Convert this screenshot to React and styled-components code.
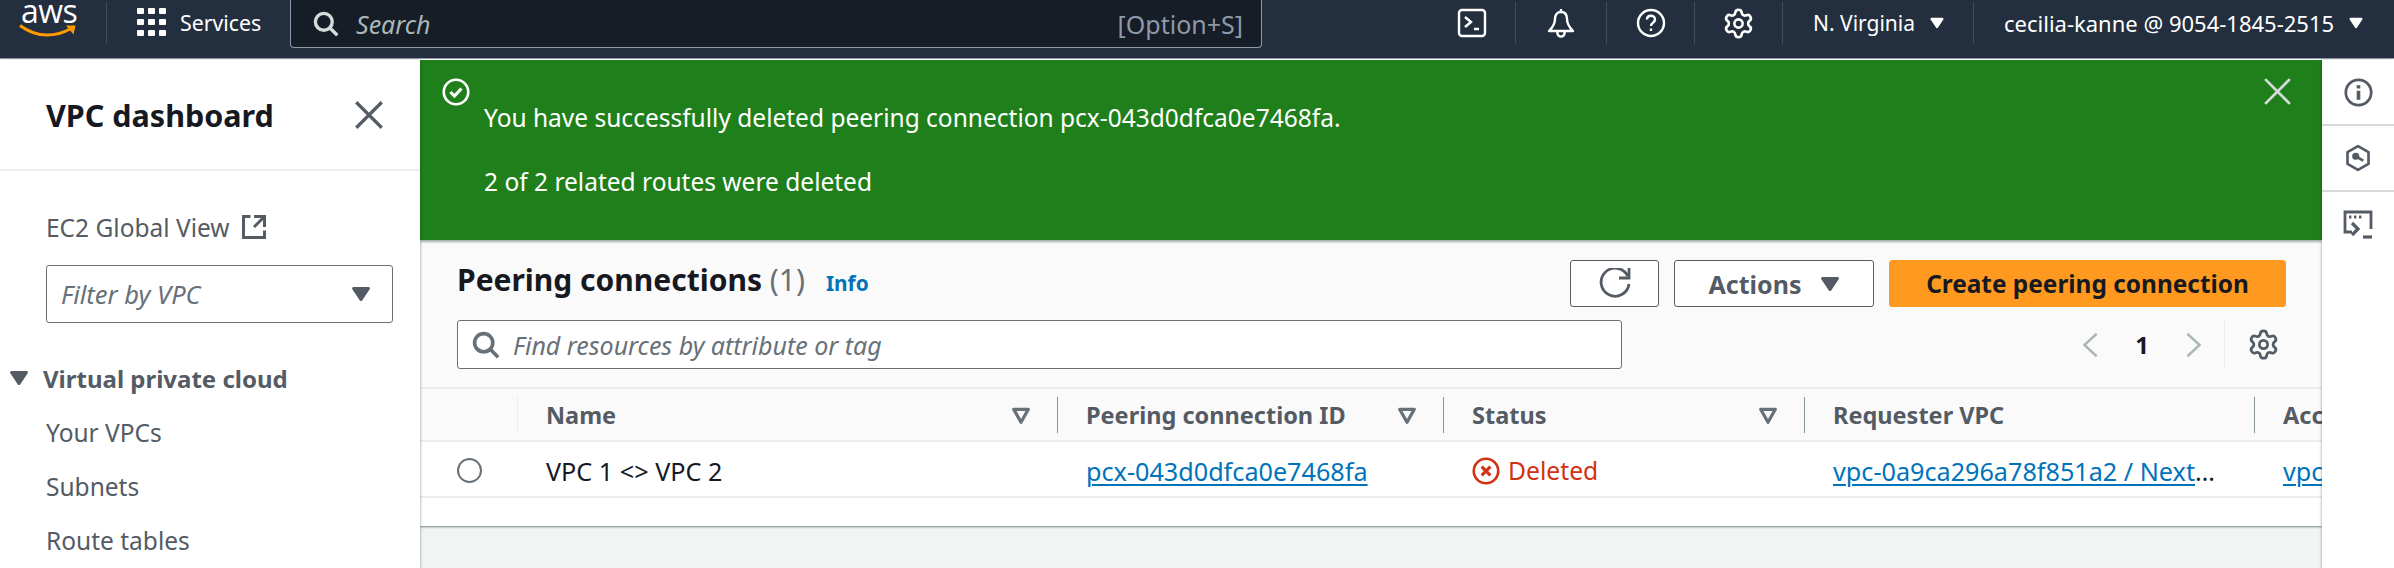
import React from 'react';
import styled, { createGlobalStyle } from 'styled-components';
import { Settings } from 'lucide-react';

const FONT = '"Noto Sans", "Open Sans", Arial, sans-serif';
const COLUMNS = '97px 540px 386px 361px 450px 300px';

const GlobalStyle = createGlobalStyle`
  html, body { margin: 0; padding: 0; background: #f2f3f3; }
  * { box-sizing: border-box; }
  body { font-family: ${FONT}; color: #16191f; overflow: hidden; }
`;

const Page = styled.div`
  width: 100%;
  height: 100vh;
  display: flex;
  flex-direction: column;
  overflow: hidden;
  background: #fff;
`;

const TopBar = styled.header`
  flex: none;
  height: 59px;
  display: flex;
  align-items: flex-start;
  background: #232f3e;
  border-bottom: 1px solid #8d99a8;
  color: #fff;
  font-size: 21.3px;
`;

const LogoBox = styled.div`
  width: 107px;
  height: 42px;
  margin-top: 2px;
  border-right: 1px solid #414d5c;
  padding-left: 19px;
  display: flex;
  flex-direction: column;
  gap: 4px;
`;

const LogoWord = styled.span`
  font-family: "Open Sans", sans-serif;
  font-size: 32px;
  line-height: 18px;
  height: 18px;
  padding-left: 2px;
  letter-spacing: -0.5px;
`;

const ServicesButton = styled.div`
  width: 183px;
  height: 44px;
  padding-left: 30px;
  display: flex;
  align-items: center;
  gap: 14px;
`;

const SearchBox = styled.div`
  width: 972px;
  height: 48px;
  padding: 0 18px 0 21px;
  display: flex;
  align-items: center;
  gap: 17px;
  background: #161d26;
  border: 1px solid #8d99a8;
  border-top: none;
  border-radius: 0 0 4px 4px;
  font-size: 25px;
`;

const SearchHint = styled.span`
  font-style: italic;
  color: #aab7b8;
  flex: 1;
`;

const Shortcut = styled.span`
  color: #8d99a8;
`;

const BarRight = styled.div`
  margin-left: auto;
  display: flex;
  align-items: center;
  height: 42px;
  margin-top: 2px;
`;

const BarIcon = styled.div`
  width: ${p => p.$w}px;
  height: 42px;
  display: flex;
  align-items: center;
  justify-content: center;
  border-right: 1px solid #414d5c;
`;

const BarMenu = styled.div`
  width: ${p => p.$w}px;
  height: 42px;
  padding-left: 30px;
  display: flex;
  align-items: center;
  gap: 11px;
  border-right: ${p => (p.$last ? 'none' : '1px solid #414d5c')};
  font-size: ${p => p.$size}px;
  white-space: nowrap;
`;

const Body = styled.div`
  flex: 1;
  min-height: 0;
  margin-top: 1px;
  display: flex;
`;

const Sidebar = styled.aside`
  flex: none;
  width: 420px;
  background: #fff;
  box-shadow: 1px 0 2px rgba(0, 28, 36, 0.25);
  z-index: 1;
  overflow: hidden;
`;

const SideHeader = styled.div`
  height: 111px;
  padding: 0 34px 0 46px;
  display: flex;
  align-items: center;
  justify-content: space-between;
  border-bottom: 2px solid #eaeded;
`;

const SideTitle = styled.h2`
  margin: 0;
  font-size: 30.5px;
  font-weight: 700;
`;

const GlobalView = styled.div`
  margin: 38px 0 0 46px;
  display: flex;
  align-items: center;
  gap: 10px;
  height: 36px;
  font-size: 24.5px;
  color: #545b64;
`;

const FilterSelect = styled.div`
  width: 347px;
  height: 58px;
  margin: 20px 0 0 46px;
  padding: 0 16px 0 14px;
  display: flex;
  align-items: center;
  justify-content: space-between;
  border: 1px solid #687078;
  border-radius: 3px;
  font-size: 25.5px;
  font-style: italic;
  color: #687078;
`;

const SectionTitle = styled.div`
  margin: 37px 0 0 4px;
  height: 36px;
  display: flex;
  align-items: center;
  gap: 9px;
  font-size: 24px;
  font-weight: 700;
  color: #545b64;
`;

const NavList = styled.ul`
  list-style: none;
  margin: 19px 0 0 46px;
  padding: 0;
`;

const NavItem = styled.li`
  height: 54px;
  line-height: 36px;
  font-size: 24.5px;
  color: #545b64;
`;

const Main = styled.main`
  flex: 1;
  min-width: 0;
  background: #f2f3f3;
`;

const Banner = styled.section`
  height: 180px;
  padding: 15px 28px 0 22px;
  display: flex;
  align-items: flex-start;
  background: #1f801b;
  color: #fff;
  font-size: 24.5px;
  box-shadow: 0 2px 2px rgba(0, 28, 36, 0.35);
  position: relative;
`;

const BannerIcon = styled.span`
  display: flex;
  margin-top: 3px;
`;

const BannerText = styled.div`
  flex: 1;
  margin: 27px 0 0 14px;
`;

const BannerLine = styled.p`
  margin: 0 0 32px;
  line-height: 32px;
`;

const Panel = styled.section`
  height: 286px;
  background: #fff;
  box-shadow: 0 1px 2px rgba(0, 28, 36, 0.5);
  overflow: hidden;
`;

const PanelHeader = styled.div`
  height: 147px;
  padding: 19px 36px 0 37px;
  background: #fafafa;
  display: flex;
  flex-direction: column;
  gap: 12px;
`;

const HeaderRow = styled.div`
  display: flex;
  align-items: center;
  justify-content: space-between;
`;

const TitleGroup = styled.div`
  display: flex;
  align-items: baseline;
  gap: 21px;
  padding-bottom: 8px;
`;

const PanelTitle = styled.h1`
  margin: 0;
  font-size: 30px;
  font-weight: 700;
`;

const Count = styled.span`
  font-weight: 400;
  color: #687078;
`;

const InfoLink = styled.a`
  font-size: 20.8px;
  font-weight: 700;
  color: #0073bb;
`;

const Actions = styled.div`
  display: flex;
  gap: 15px;
`;

const Button = styled.div`
  width: ${p => p.$w}px;
  height: 47px;
  padding-left: ${p => p.$pl || 0}px;
  display: flex;
  align-items: center;
  justify-content: center;
  gap: 14px;
  border: 1px solid ${p => (p.$primary ? '#ff991f' : '#545b64')};
  border-radius: 3px;
  background: ${p => (p.$primary ? '#ff991f' : '#fff')};
  color: ${p => (p.$primary ? '#16191f' : '#545b64')};
  font-size: ${p => (p.$primary ? 24.4 : 25)}px;
  font-weight: 700;
`;

const FindBox = styled.div`
  width: 1165px;
  height: 49px;
  padding-left: 13px;
  display: flex;
  align-items: center;
  gap: 13px;
  background: #fff;
  border: 1px solid #687078;
  border-radius: 3px;
  font-size: 25px;
  font-style: italic;
  color: #687078;
`;

const Pager = styled.div`
  display: flex;
  align-items: center;
  height: 49px;
`;

const PageNumber = styled.span`
  width: 72px;
  text-align: center;
  font-size: 24px;
  font-weight: 700;
`;

const PagerSettings = styled.div`
  height: 49px;
  margin-left: 16px;
  padding: 0 6px 0 22px;
  display: flex;
  align-items: center;
  border-left: 1px solid #eaeded;
  color: #545b64;
`;

const HeadRow = styled.div`
  height: 55px;
  display: grid;
  grid-template-columns: ${COLUMNS};
  align-items: center;
  background: #fafafa;
  border-top: 2px solid #eaeded;
  border-bottom: 2px solid #eaeded;
`;

const HeadCell = styled.div`
  height: 36px;
  padding: 0 23px 0 28px;
  display: flex;
  align-items: center;
  justify-content: space-between;
  border-left: 1px solid ${p => (p.$faint ? '#eaeded' : '#879596')};
  font-size: 23.5px;
  font-weight: 700;
  color: #545b64;
  white-space: nowrap;
`;

const DataRow = styled.div`
  height: 56px;
  padding-top: 3px;
  display: grid;
  grid-template-columns: ${COLUMNS};
  align-items: center;
  border-bottom: 2px solid #eaeded;
  font-size: 25.2px;
`;

const Cell = styled.div`
  padding: 0 34px 0 29px;
  white-space: nowrap;
  overflow: hidden;
  text-overflow: ellipsis;
`;

const RadioCell = styled.div`
  padding-left: 37px;
  display: flex;
`;

const Radio = styled.span`
  width: 25px;
  height: 25px;
  border: 2px solid #687078;
  border-radius: 50%;
  background: #fff;
`;

const IdLink = styled.a`
  color: #0073bb;
  text-decoration: underline;
  text-decoration-thickness: 2px;
  text-underline-offset: 3px;
`;

const StatusCell = styled.div`
  padding-left: 29px;
  display: flex;
  align-items: center;
  gap: 8px;
  color: #d13212;
  font-size: 24.7px;
`;

const Rail = styled.aside`
  flex: none;
  width: 72px;
  background: #fff;
  box-shadow: -1px 0 2px rgba(0, 28, 36, 0.25);
  z-index: 1;
`;

const RailItem = styled.div`
  height: 66px;
  display: flex;
  align-items: center;
  justify-content: center;
  border-bottom: ${p => (p.$last ? 'none' : '2px solid #d5dbdb')};
`;

const Icon = ({ size = 16, color = 'currentColor', width = 2, fill = 'none', children }) => (
  <svg width={size} height={size} viewBox="0 0 16 16" fill={fill} stroke={color} strokeWidth={width} style={{ flex: 'none' }}>
    {children}
  </svg>
);

const CaretDown = ({ size, color }) => (
  <Icon size={size} color={color} fill={color} width={1.5}>
    <path d="M4 5h8l-4 6z" strokeLinejoin="round" />
  </Icon>
);

const SortCaret = () => (
  <Icon size={26} color="#687078" width={2}>
    <path d="M3.500 4.500h9L8 12.500z" strokeLinejoin="round" />
  </Icon>
);

const SearchIcon = ({ size, color }) => (
  <Icon size={size} color={color} width={2}>
    <circle cx="7" cy="7" r="5" />
    <path d="m15 15-4.500-4.500" />
  </Icon>
);

const CloseIcon = ({ size, color, width }) => (
  <Icon size={size} color={color} width={width}>
    <path d="m2 2 12 12M14 2 2 14" />
  </Icon>
);

const AwsSmile = () => (
  <svg width="58" height="14" viewBox="0 0 58 14" fill="none" style={{ flex: 'none' }}>
    <path d="M1 1.500c8 6 17 9.500 27 9.500 8 0 16-2 23-6" stroke="#f90" strokeWidth="3" />
    <path d="M47 1.500h9.500l-2 9z" fill="#f90" />
  </svg>
);

const GridIcon = () => (
  <svg width="29" height="28" viewBox="0 0 29 28" fill="#fff">
    {[0, 11, 22].flatMap(y => [0, 11, 22].map(x => (
      <rect key={`${x}-${y}`} x={x} y={y} width="7" height="6" rx="1" />
    )))}
  </svg>
);

const HexIcon = () => (
  <Icon size={28} color="#545b64" width={1.5}>
    <path d="M8 1.200 14 4.600v6.800L8 14.800 2 11.400V4.600z" strokeLinejoin="round" />
    <circle cx="6.700" cy="7" r="1.300" fill="#545b64" />
    <path d="m7.500 7.500 3.500 2" />
  </Icon>
);

const ScreenIcon = () => (
  <Icon size={32} color="#545b64" width={1.400}>
    <path d="M5 11.500H1.500v-10h13V10" />
    <path d="M3.500 4h1.200M6 4h1.200M8.500 4h1.200" />
    <path d="m5 7 3 3-3 3" strokeWidth="1.600" />
    <path d="M10.500 14H15" strokeWidth="1.600" />
  </Icon>
);

export default function App() {
  return (
    <Page>
      <GlobalStyle />
      <TopBar>
        <LogoBox>
          <LogoWord>aws</LogoWord>
          <AwsSmile />
        </LogoBox>
        <ServicesButton>
          <GridIcon />
          <span>Services</span>
        </ServicesButton>
        <SearchBox>
          <SearchIcon size={27} color="#d5dbdb" />
          <SearchHint>Search</SearchHint>
          <Shortcut>[Option+S]</Shortcut>
        </SearchBox>
        <BarRight>
          <BarIcon $w={88}>
            <Icon size={32} color="#fff" width={1.200}>
              <rect x="1.500" y="1.500" width="13" height="13" rx="1.500" />
              <path d="m4.500 5 3 2.500-3 2.500M9 11h2.500" />
            </Icon>
          </BarIcon>
          <BarIcon $w={91}>
            <Icon size={32} color="#fff" width={1.200}>
              <path d="M8 1v1.500M8 2.500c-2 0-3 1.500-3 3.500 0 2.500-1 4-3 6h12c-2-2-3-3.500-3-6 0-2-1-3.500-3-3.500z" strokeLinejoin="round" />
              <path d="M6.200 12v1a1.800 1.800 0 0 0 3.600 0v-1" />
            </Icon>
          </BarIcon>
          <BarIcon $w={88}>
            <Icon size={32} color="#fff" width={1.200}>
              <circle cx="8" cy="8" r="6.500" />
              <path d="M6 6.300C6 5 7 4.400 8 4.400s2 .7 2 1.800c0 1.600-2 1.600-2 3.300M8 10.800v1.200" />
            </Icon>
          </BarIcon>
          <BarIcon $w={88}>
            <Settings size={33} color="#fff" strokeWidth={1.900} />
          </BarIcon>
          <BarMenu $w={191} $size={21}>
            <span>N. Virginia</span>
            <CaretDown size={22} color="#fff" />
          </BarMenu>
          <BarMenu $w={420} $size={22} $last>
            <span>cecilia-kanne @ 9054-1845-2515</span>
            <CaretDown size={22} color="#fff" />
          </BarMenu>
        </BarRight>
      </TopBar>

      <Body>
        <Sidebar>
          <SideHeader>
            <SideTitle>VPC dashboard</SideTitle>
            <CloseIcon size={34} color="#545b64" width={1.500} />
          </SideHeader>
          <GlobalView>
            <span>EC2 Global View</span>
            <Icon size={28} color="#545b64" width={1.700}>
              <path d="M14 8V2H8M14 2 8 8M6 2H2v12h12v-4" />
            </Icon>
          </GlobalView>
          <FilterSelect>
            <span>Filter by VPC</span>
            <CaretDown size={30} color="#545b64" />
          </FilterSelect>
          <SectionTitle>
            <CaretDown size={30} color="#545b64" />
            <span>Virtual private cloud</span>
          </SectionTitle>
          <NavList>
            <NavItem>Your VPCs</NavItem>
            <NavItem>Subnets</NavItem>
            <NavItem>Route tables</NavItem>
          </NavList>
        </Sidebar>

        <Main>
          <Banner>
            <BannerIcon>
              <Icon size={28} color="#fff" width={1.500}>
                <circle cx="8" cy="8" r="7" />
                <path d="m4.800 8 2.300 2.300 4-4.300" strokeWidth="1.800" />
              </Icon>
            </BannerIcon>
            <BannerText>
              <BannerLine>You have successfully deleted peering connection pcx-043d0dfca0e7468fa.</BannerLine>
              <BannerLine>2 of 2 related routes were deleted</BannerLine>
            </BannerText>
            <CloseIcon size={33} color="#d5dbdb" width={1.300} />
          </Banner>

          <Panel>
            <PanelHeader>
              <HeaderRow>
                <TitleGroup>
                  <PanelTitle>Peering connections <Count>(1)</Count></PanelTitle>
                  <InfoLink>Info</InfoLink>
                </TitleGroup>
                <Actions>
                  <Button $w={89}>
                    <Icon size={32} color="#545b64" width={1.400}>
                      <path d="M10 5h5V0M15 8a7 7 0 1 1-.68-4.010" />
                    </Icon>
                  </Button>
                  <Button $w={200} $pl={6}>
                    <span>Actions</span>
                    <CaretDown size={30} color="#545b64" />
                  </Button>
                  <Button $w={397} $primary>Create peering connection</Button>
                </Actions>
              </HeaderRow>
              <HeaderRow>
                <FindBox>
                  <SearchIcon size={29} color="#687078" />
                  <span>Find resources by attribute or tag</span>
                </FindBox>
                <Pager>
                  <Icon size={30} color="#aab7b8" width={1.300}><path d="M11 2 4.500 8l6.500 6" /></Icon>
                  <PageNumber>1</PageNumber>
                  <Icon size={30} color="#aab7b8" width={1.300}><path d="M5 2l6.500 6L5 14" /></Icon>
                  <PagerSettings>
                    <Settings size={33} strokeWidth={2} />
                  </PagerSettings>
                </Pager>
              </HeaderRow>
            </PanelHeader>
            <HeadRow>
              <div />
              <HeadCell $faint>Name <SortCaret /></HeadCell>
              <HeadCell>Peering connection ID <SortCaret /></HeadCell>
              <HeadCell>Status <SortCaret /></HeadCell>
              <HeadCell>Requester VPC</HeadCell>
              <HeadCell>Accepter VPC</HeadCell>
            </HeadRow>
            <DataRow>
              <RadioCell><Radio /></RadioCell>
              <Cell>VPC 1 &lt;&gt; VPC 2</Cell>
              <Cell><IdLink>pcx-043d0dfca0e7468fa</IdLink></Cell>
              <StatusCell>
                <Icon size={28} color="#d13212" width={1.500}>
                  <circle cx="8" cy="8" r="7" />
                  <path d="m5.500 5.500 5 5M10.500 5.500l-5 5" strokeWidth="1.800" />
                </Icon>
                <span>Deleted</span>
              </StatusCell>
              <Cell><IdLink>vpc-0a9ca296a78f851a2 / NextWork-1-VPC</IdLink></Cell>
              <Cell><IdLink>vpc-</IdLink></Cell>
            </DataRow>
          </Panel>
        </Main>

        <Rail>
          <RailItem>
            <Icon size={29} color="#545b64" width={1.500}>
              <circle cx="8" cy="8" r="7" />
              <path d="M8 7v5M8 4v1.800" strokeWidth="2" />
            </Icon>
          </RailItem>
          <RailItem><HexIcon /></RailItem>
          <RailItem $last><ScreenIcon /></RailItem>
        </Rail>
      </Body>
    </Page>
  );
}
